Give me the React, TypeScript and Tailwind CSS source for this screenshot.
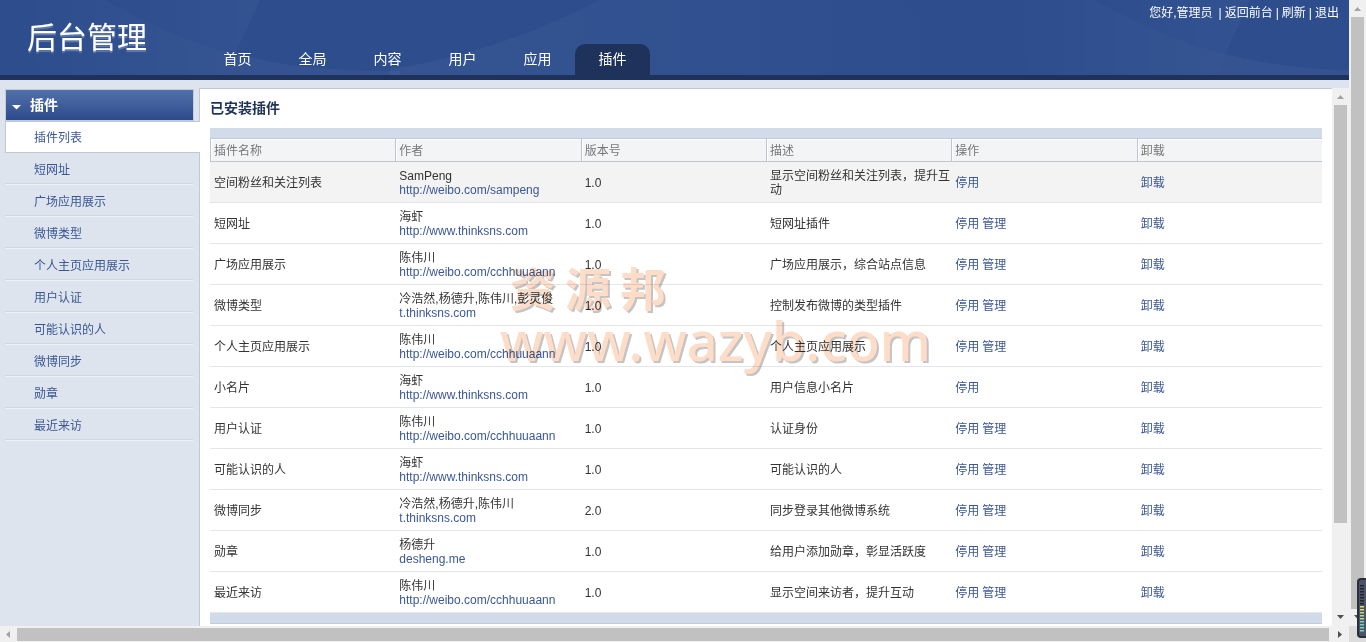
import React, { useState } from "react";
import clsx from "clsx";

interface Plugin {
  name: string;
  author: string;
  site: string;
  version: string;
  desc: string;
  manage: boolean;
}

const NAV = ["首页", "全局", "内容", "用户", "应用", "插件"];

const MENU = [
  "插件列表",
  "短网址",
  "广场应用展示",
  "微博类型",
  "个人主页应用展示",
  "用户认证",
  "可能认识的人",
  "微博同步",
  "勋章",
  "最近来访",
];

const COLUMNS = ["插件名称", "作者", "版本号", "描述", "操作", "卸载"];

const WEIBO = "http://weibo.com/cchhuuaann";
const THINKSNS = "http://www.thinksns.com";

const PLUGINS: Plugin[] = [
  { name: "空间粉丝和关注列表", author: "SamPeng", site: "http://weibo.com/sampeng", version: "1.0", desc: "显示空间粉丝和关注列表，提升互动", manage: false },
  { name: "短网址", author: "海虾", site: THINKSNS, version: "1.0", desc: "短网址插件", manage: true },
  { name: "广场应用展示", author: "陈伟川", site: WEIBO, version: "1.0", desc: "广场应用展示，综合站点信息", manage: true },
  { name: "微博类型", author: "冷浩然,杨德升,陈伟川,彭灵俊", site: "t.thinksns.com", version: "1.0", desc: "控制发布微博的类型插件", manage: true },
  { name: "个人主页应用展示", author: "陈伟川", site: WEIBO, version: "1.0", desc: "个人主页应用展示", manage: true },
  { name: "小名片", author: "海虾", site: THINKSNS, version: "1.0", desc: "用户信息小名片", manage: false },
  { name: "用户认证", author: "陈伟川", site: WEIBO, version: "1.0", desc: "认证身份", manage: true },
  { name: "可能认识的人", author: "海虾", site: THINKSNS, version: "1.0", desc: "可能认识的人", manage: true },
  { name: "微博同步", author: "冷浩然,杨德升,陈伟川", site: "t.thinksns.com", version: "2.0", desc: "同步登录其他微博系统", manage: true },
  { name: "勋章", author: "杨德升", site: "desheng.me", version: "1.0", desc: "给用户添加勋章，彰显活跃度", manage: true },
  { name: "最近来访", author: "陈伟川", site: WEIBO, version: "1.0", desc: "显示空间来访者，提升互动", manage: true },
];

const Arrow = ({ className, points }: { className: string; points: string }) => (
  <svg viewBox="0 0 17 17" className={clsx("size-[17px] shrink-0", className)}>
    <polygon points={points} fill="currentColor" />
  </svg>
);

const UP = "5,11 12,11 8.5,7";
const DOWN = "5,6 12,6 8.5,10";
const LEFT = "10,5 10,12 6,8.5";
const RIGHT = "6,5 6,12 10,8.5";

// Light swooshes behind the logo and navigation
const HeaderArt = () => (
  <svg className="absolute top-0 left-0 h-[75px] w-[1980px]" viewBox="0 0 1980 75">
    <defs>
      <linearGradient id="glow" x1="0" y1="0" x2="1" y2="0">
        <stop offset="0" stopColor="#fff" stopOpacity="0" />
        <stop offset="1" stopColor="#fff" stopOpacity="0.04" />
      </linearGradient>
      <linearGradient id="fade" x1="0" y1="0" x2="1" y2="0">
        <stop offset="0" stopColor="#fff" stopOpacity="0.04" />
        <stop offset="1" stopColor="#fff" stopOpacity="0" />
      </linearGradient>
      <linearGradient id="ray" x1="0" y1="0" x2="1" y2="0">
        <stop offset="0" stopColor="#fff" stopOpacity="0" />
        <stop offset="1" stopColor="#fff" stopOpacity="0.03" />
      </linearGradient>
      <g id="swoosh">
        <path d="M104 0C150 24 190 44 235 54L226 75H40L20 0Z" fill="url(#glow)" />
        <path d="M104 0C150 24 190 44 235 54L260 0Z" fill="url(#ray)" />
        <path d="M235 54C290 68 340 71 400 71V75H226Z" fill="#fff" fillOpacity="0.04" />
        <path d="M600 0C540 30 470 58 390 69V75H960L900 0Z" fill="url(#fade)" />
      </g>
    </defs>
    <use href="#swoosh" />
    <use href="#swoosh" x="990" />
  </svg>
);

const Header = () => {
  const [current, setCurrent] = useState("插件");

  return (
    <header className="relative flex h-20 shrink-0 items-end overflow-hidden border-b-[5px] border-[#1f325c] bg-[#2d4d8d] text-white">
      <HeaderArt />
      <h1 className="relative w-[200px] shrink-0 self-start pt-[18px] pl-[27px] text-[30px] leading-10 font-normal [text-shadow:0_2px_1px_#ffffff40]">
        后台管理
      </h1>
      <nav className="relative flex">
        {NAV.map((item) => (
          <a
            key={item}
            href="#"
            onClick={() => setCurrent(item)}
            className={clsx(
              "h-[31px] w-[75px] rounded-t-[10px] text-center text-sm leading-[30px]",
              current === item && "bg-[#1f325c]"
            )}
          >
            {item}
          </a>
        ))}
      </nav>
      <div className="relative ml-auto flex gap-1 self-start pt-[5px] pr-[10px] text-xs leading-4 whitespace-nowrap">
        <span className="mr-[2px]">您好,管理员</span>
        <div className="flex gap-[3px]">
          <span>|</span>
          <a href="#">返回前台</a>
          <span>|</span>
          <a href="#">刷新</a>
          <span>|</span>
          <a href="#">退出</a>
        </div>
      </div>
    </header>
  );
};

const Sidebar = () => {
  const [active, setActive] = useState(MENU[0]);

  return (
    <aside className="flex w-[200px] shrink-0 flex-col">
      <div className="border-r border-[#bfc7d9] pt-px pr-[5px] pl-[5px]">
        <button
          type="button"
          className="flex h-8 w-full items-center gap-[9px] border border-[#c3cbdb] bg-linear-to-b from-[#5271ab] to-[#2d4b8b] pl-[6px] text-sm font-bold text-white"
        >
          <svg viewBox="0 0 9 5" className="mt-1 h-[5px] w-[9px]">
            <polygon points="0,0 9,0 4.5,4.5" fill="#fff" />
          </svg>
          插件
        </button>
      </div>
      <ul className="text-xs">
        {MENU.map((item) => (
          <li
            key={item}
            className={clsx("pl-[5px]", active !== item && "border-r border-[#bfc7d9] pr-[6px]")}
          >
            <a
              href="#"
              onClick={() => setActive(item)}
              className={clsx(
                "block h-8 text-[#3a5795]",
                active === item
                  ? "border-y border-l border-[#bfc7d9] bg-white pl-7 leading-8"
                  : "border-b border-[#eef1f6] pl-[29px] leading-[34px] shadow-[inset_0_-1px_0_#d0d7e2]"
              )}
            >
              {item}
            </a>
          </li>
        ))}
      </ul>
      <div className="flex-1 border-r border-[#bfc7d9]" />
    </aside>
  );
};

const PluginTable = () => (
  <table className="w-full table-fixed border-separate border-spacing-0 text-xs leading-[14px]">
    <thead>
      <tr className="h-[23px] bg-[#f2f4f6]">
        {COLUMNS.map((col) => (
          <th
            key={col}
            className="border-b border-l border-[#bfc5d0] pt-[2px] pr-0 pb-0 pl-[3px] text-left font-normal text-[#777] shadow-[inset_1px_1px_0_#fff]"
          >
            {col}
          </th>
        ))}
      </tr>
    </thead>
    <tbody>
      {PLUGINS.map((plugin) => (
        <tr
          key={plugin.name}
          className="h-[41px] text-[#333] first:bg-[#f3f3f3] *:border-b *:border-[#e3e6eb] *:pt-px *:pr-0 *:pb-0 *:pl-1"
        >
          <td>{plugin.name}</td>
          <td className="whitespace-nowrap">
            {plugin.author}
            <br />
            <a href="#" className="text-[#3a5795]">{plugin.site}</a>
          </td>
          <td>{plugin.version}</td>
          <td>{plugin.desc}</td>
          <td className="text-[#3a5795]">
            <a href="#">停用</a>
            {plugin.manage && <a href="#" className="ml-[3px]">管理</a>}
          </td>
          <td className="text-[#3a5795]">
            <a href="#">卸载</a>
          </td>
        </tr>
      ))}
    </tbody>
  </table>
);

const Watermark = () => (
  <div className="pointer-events-none absolute top-[168px] left-[300px] text-[#fddcc8] mix-blend-multiply [text-shadow:2px_2px_0_#c4c4c4]">
    <div className="flex gap-[9px] pl-[10px] font-['Noto_Sans_CJK_SC',sans-serif] text-[46px] leading-[58px] font-bold">
      <span>资</span>
      <span>源</span>
      <span>邦</span>
    </div>
    <div className="font-['Noto_Sans',sans-serif] text-[54px] leading-[50px] font-medium">www.wazyb.com</div>
  </div>
);

// Small desktop level meter docked at the right edge
const LevelMeter = () => (
  <div className="absolute right-0 bottom-1 h-[60px] w-[9px] overflow-hidden rounded-l-[4px] border-y-2 border-l-2 border-[#2b2f3c] bg-[#4d5468]">
    <svg viewBox="0 0 4 48" className="mt-[5px] ml-px h-12 w-1">
      {Array.from({ length: 16 }, (_, i) => (
        <rect
          key={i}
          y={i * 3}
          width="4"
          height="1.5"
          fill={i < 7 ? "#20242f" : i < 9 ? "#e6d95c" : i < 12 ? "#b4dc86" : "#6fd8c0"}
        />
      ))}
    </svg>
  </div>
);

const App = () => {
  return (
    <div className="relative flex h-screen flex-col overflow-hidden bg-[#dde4ed] font-['Liberation_Sans','Noto_Sans_CJK_SC',sans-serif]">
      <div className="flex min-h-0 flex-1">
        <div className="flex min-w-0 flex-1 flex-col">
          <Header />
          <div className="mt-2 flex min-h-0 flex-1">
            <Sidebar />
            <main className="relative min-w-0 flex-1 overflow-hidden border-t border-[#bfc7d9] bg-white pr-[10px] pl-[10px]">
              <h2 className="pt-[9px] pb-[10px] text-sm leading-5 font-bold text-[#1f325c]">
                已安装插件
              </h2>
              <div className="h-[11px] border-b border-[#c0cbdb] bg-[#d1dbea]" />
              <PluginTable />
              <div className="h-[11px] border-b border-[#c0cbdb] bg-[#d1dbea]" />
              <Watermark />
            </main>
            <div className="flex w-[17px] shrink-0 flex-col bg-[#f0f0f0]">
              <Arrow points={UP} className="text-[#a3a3a3]" />
              <div className="mx-[2px] flex min-h-0 flex-1 flex-col">
                <div className="h-[83%] bg-[#c1c1c1]" />
              </div>
              <Arrow points={DOWN} className="text-[#505050]" />
            </div>
          </div>
        </div>
        <div className="flex w-[17px] shrink-0 flex-col bg-[#f0f0f0]">
          <Arrow points={UP} className="text-[#a3a3a3]" />
          <div className="mx-[2px] flex-1 bg-[#c1c1c1]" />
          <Arrow points={DOWN} className="text-[#505050]" />
        </div>
      </div>
      <div className="flex h-4 shrink-0 items-center bg-[#f0f0f0]">
        <Arrow points={LEFT} className="text-[#a3a3a3]" />
        <div className="h-[13px] flex-1 bg-[#c1c1c1]" />
        <Arrow points={RIGHT} className="ml-[3px] text-[#505050]" />
        <div className="h-4 w-[17px] bg-[#dcdcdc]" />
      </div>
      <LevelMeter />
    </div>
  );
};

export default App;
